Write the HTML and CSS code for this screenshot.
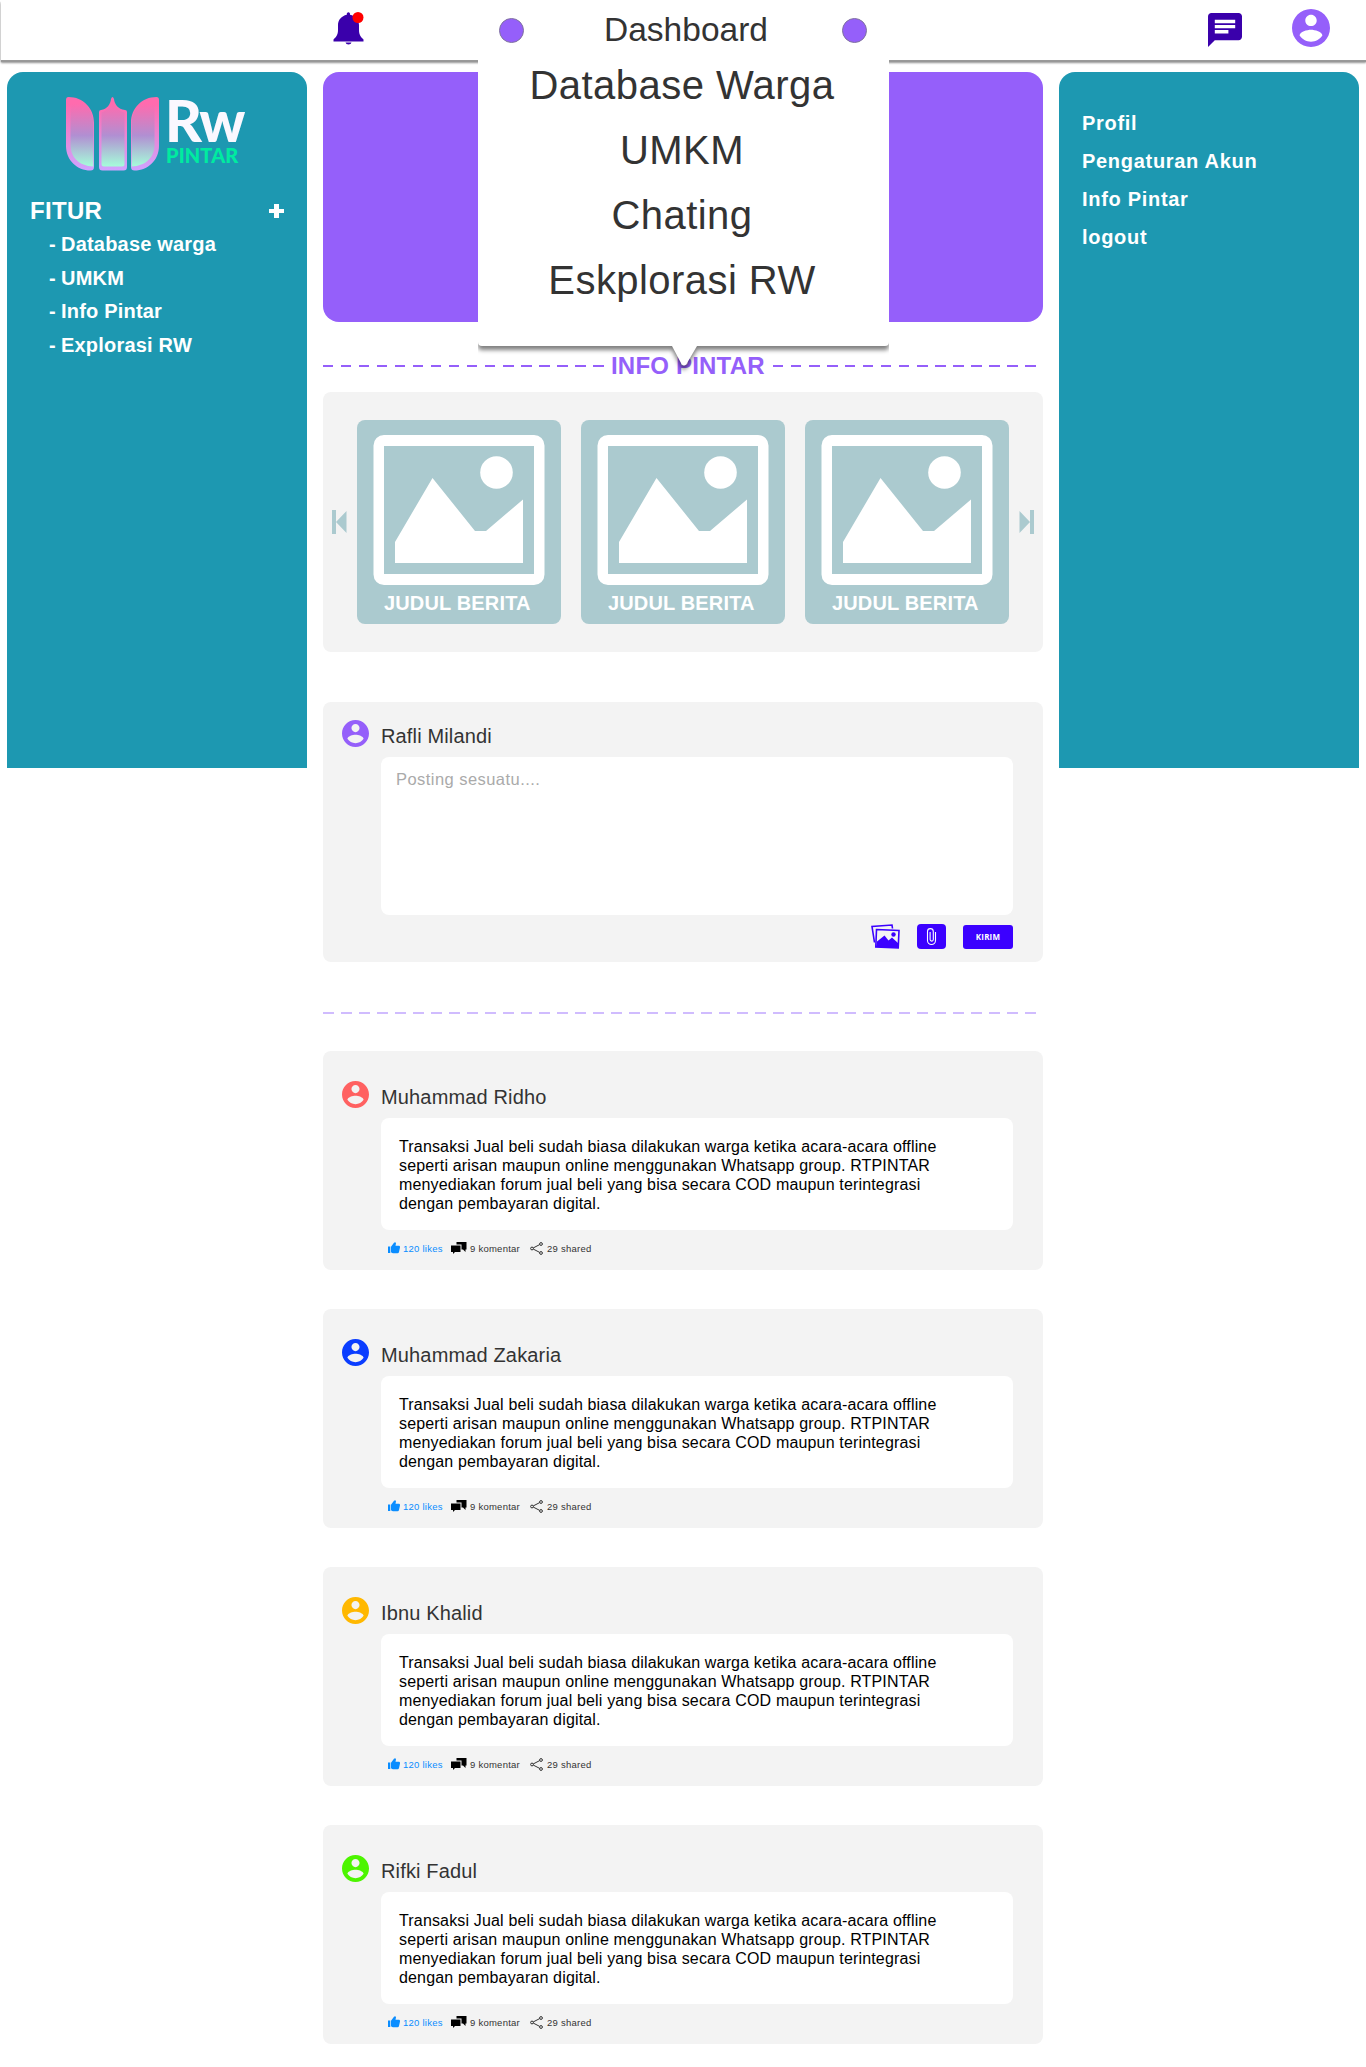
FILE: index.html
```html
<!DOCTYPE html>
<html lang="id">
<head>
<meta charset="utf-8">
<title>RW Pintar</title>
<link rel="stylesheet" href="styles.css">
</head>
<body>
<svg class="defs" width="0" height="0">
  <defs>
    <linearGradient id="petal-rim" gradientUnits="userSpaceOnUse" x1="0" y1="0" x2="0" y2="73"><stop offset=".1" stop-color="#ff6bae"/><stop offset="1" stop-color="#cfa3ff"/></linearGradient>
    <linearGradient id="petal-fill" gradientUnits="userSpaceOnUse" x1="0" y1="0" x2="0" y2="70"><stop offset=".1" stop-color="#ff6bae"/><stop offset=".55" stop-color="#b18fd2"/><stop offset="1" stop-color="#a5ffda"/></linearGradient>
  </defs>
  <symbol id="avatar" viewBox="2 2 20 20"><path fill="currentColor" d="M12 2C6.48 2 2 6.48 2 12s4.480 10 10 10 10-4.480 10-10S17.520 2 12 2zm0 3c1.660 0 3 1.340 3 3s-1.340 3-3 3-3-1.340-3-3 1.340-3 3-3zm0 14.200c-2.500 0-4.710-1.280-6-3.220.03-1.990 4-3.080 6-3.080 1.990 0 5.970 1.090 6 3.080-1.290 1.940-3.500 3.220-6 3.220z"/></symbol>
  <symbol id="picture" viewBox="0 0 172 150"><path fill="#fff" fill-rule="evenodd" d="M11 0H161A10.500 10.500 0 0 1 171.500 10.500V139.500A10.500 10.500 0 0 1 161 150H11A10.500 10.500 0 0 1 .5 139.500V10.500A10.500 10.500 0 0 1 11 0zM11 11V139H161V11zM22 107 59.500 43 102 96H113L150 64.500V128H22z"/><circle cx="123.500" cy="37.500" r="16.300" fill="#fff"/></symbol>
  <symbol id="like" viewBox="0 0 12 12"><path fill="currentColor" d="M0 4.500h2.300V11H0zM3 4.800 6 .7Q7.500-.3 8 1.200L7.500 3.800H11Q12.200 4 12 5.500L11 10Q10.700 11.200 9.500 11.200H5Q3 11 3 9.800z"/></symbol>
  <symbol id="comment" viewBox="0 0 16 12"><path fill="currentColor" d="M5.500 0H15.500V7.500H14.500V10L12 7.500H10.500V2.500H5.500zM0 3.500H9.500V10H4L2 12V10H0z"/></symbol>
  <symbol id="share" viewBox="0 0 13 13"><g fill="none" stroke="currentColor" stroke-width="1"><circle cx="2" cy="6.500" r="1.400"/><circle cx="11" cy="2" r="1.400"/><circle cx="11" cy="11" r="1.400"/><path d="M3.300 5.900 9.700 2.600M3.300 7.100l6.400 3.300"/></g></symbol>
</svg>

<header class="topbar">
  <svg class="bell" width="32" height="34" viewBox="0 0 32 34"><path fill="#3a00ab" d="M13.800 1.500q1.700-2.600 3.200 0v1.300C22.500 4 26 8 26 13v5c0 5 2 7 4.500 9.500V29.500H.5v-2C3 25 5 23 5 18v-5C5 8 8.500 4 13.800 2.800zM12.500 30.500h6q-.5 2-3 2t-3-2z"/><circle cx="25" cy="5.500" r="5.500" fill="#f00"/></svg>
  <svg class="chat" width="34" height="34" viewBox="2 2 20 20"><path fill="#3a00ab" d="M20 2H4c-1.100 0-1.990.9-1.990 2L2 22l4-4h14c1.100 0 2-.9 2-2V4c0-1.100-.9-2-2-2zM6 9h12v2H6V9zm8 5H6v-2h8v2zm4-6H6V6h12v2z"/></svg>
  <svg class="me" width="38" height="38"><use href="#avatar"/></svg>
</header>

<div class="layout">
  <aside class="side">
    <div class="brand">
      <svg width="94" height="74" viewBox="0 0 94 74">
        <path fill="url(#petal-rim)" d="M2.500 0C17 0 28 11 28 26V70q0 3.500-3.500 3.500C11 73.500 0 63 0 49V3Q0 0 2.500 0zM33 15q0-2 2-2C41 12.500 44.500 7 45 2q1.500-4 3 0c.5 5 4 10.500 11 11q2 0 2 2V70q0 3.500-3.500 3.500h-21Q33 73.500 33 70zM90.500 0C76 0 65 11 65 26V70q0 3.500 3.500 3.500C82 73.500 93 63 93 49V3Q93 0 90.500 0z"/>
        <path fill="url(#petal-fill)" d="M4.500 2C17 2 27.300 13 27.300 26V69.500C13 69 4.500 60 4.500 48zM35.500 15.500C42 13 46 8 46.500 4 47 8 51 13 58.500 15.500V67q0 2.500-2.500 2.500H38Q35.500 69.500 35.500 67zM88.500 2C76 2 65.700 13 65.700 26V69.500C80 69 88.500 60 88.500 48z"/>
      </svg>
      <div class="brand-text"><b class="rw">Rw</b><b class="pintar">PINTAR</b></div>
    </div>
    <h2 class="side-head"><span>FITUR</span><svg width="15" height="14"><path fill="#fff" d="M5 0h5v5h5v4h-5v5H5V9H0V5h5z"/></svg></h2>
    <ul class="features">
      <li><i>-</i>Database warga</li><li><i>-</i>UMKM</li><li><i>-</i>Info Pintar</li><li><i>-</i>Explorasi RW</li>
    </ul>
  </aside>

  <main class="feed">
    <section class="hero"></section>
    <div class="divider"><span class="dash dash-left"></span><span class="divider-text">INFO PINTAR</span><span class="dash dash-right"></span></div>
    <section class="news">
      <svg class="arrow" width="15" height="24"><path fill="#abcacf" d="M0 0h4v24H0zM4 12 14.500 1V23z"/></svg>
      <div class="tiles">
        <article class="tile"><svg width="172" height="150"><use href="#picture"/></svg><h3>JUDUL BERITA</h3></article>
        <article class="tile"><svg width="172" height="150"><use href="#picture"/></svg><h3>JUDUL BERITA</h3></article>
        <article class="tile"><svg width="172" height="150"><use href="#picture"/></svg><h3>JUDUL BERITA</h3></article>
      </div>
      <svg class="arrow" width="15" height="24"><path fill="#abcacf" d="M11 0h4v24h-4zM11 12 .5 1V23z"/></svg>
    </section>

    <section class="composer">
      <div class="author"><svg class="face violet" width="27" height="27"><use href="#avatar"/></svg><span>Rafli Milandi</span></div>
      <div class="input">Posting sesuatu....</div>
      <div class="actions">
        <svg width="29" height="25" viewBox="0 0 29 25"><g fill="none" stroke="#3b00ff" stroke-width="1.600"><path d="M3.500 18.500 1 2.500 21 1l.5 3.500"/><path d="M5.500 5.500 28 6.500 27.200 24 4.800 23z"/></g><path fill="#3b00ff" d="M5 23 6 17.500 13.500 11.500 17.500 16.500 21 13.500 27.500 19.500V24z"/><circle cx="22.500" cy="10.500" r="2.200" fill="#3b00ff"/></svg>
        <svg width="29" height="25" viewBox="0 0 29 25"><rect width="29" height="25" rx="4" fill="#3b00ff"/><path fill="none" stroke="#fff" stroke-width="1.100" d="M18.500 8v8.500a4 4 0 0 1-8 0V7.500a2.900 2.900 0 0 1 5.800 0v8a1.600 1.600 0 0 1-3.200 0V8"/></svg>
        <button class="send">KIRIM</button>
      </div>
    </section>

    <div class="divider pale"><span class="dash"></span></div>

    <article class="post">
      <div class="author"><svg class="face red" width="27" height="27"><use href="#avatar"/></svg><span>Muhammad Ridho</span></div>
      <p>Transaksi Jual beli sudah biasa dilakukan warga ketika acara-acara offline<br>seperti arisan maupun online menggunakan Whatsapp group. RTPINTAR<br>menyediakan forum jual beli yang bisa secara COD maupun terintegrasi<br>dengan pembayaran digital.</p>
      <div class="stats"><svg class="like" width="12" height="12"><use href="#like"/></svg><span class="likes">120 likes</span><svg class="comment" width="16" height="12"><use href="#comment"/></svg><span class="comments">9 komentar</span><svg class="share" width="13" height="13"><use href="#share"/></svg><span class="shares">29 shared</span></div>
    </article>
    <article class="post">
      <div class="author"><svg class="face blue" width="27" height="27"><use href="#avatar"/></svg><span>Muhammad Zakaria</span></div>
      <p>Transaksi Jual beli sudah biasa dilakukan warga ketika acara-acara offline<br>seperti arisan maupun online menggunakan Whatsapp group. RTPINTAR<br>menyediakan forum jual beli yang bisa secara COD maupun terintegrasi<br>dengan pembayaran digital.</p>
      <div class="stats"><svg class="like" width="12" height="12"><use href="#like"/></svg><span class="likes">120 likes</span><svg class="comment" width="16" height="12"><use href="#comment"/></svg><span class="comments">9 komentar</span><svg class="share" width="13" height="13"><use href="#share"/></svg><span class="shares">29 shared</span></div>
    </article>
    <article class="post">
      <div class="author"><svg class="face amber" width="27" height="27"><use href="#avatar"/></svg><span>Ibnu Khalid</span></div>
      <p>Transaksi Jual beli sudah biasa dilakukan warga ketika acara-acara offline<br>seperti arisan maupun online menggunakan Whatsapp group. RTPINTAR<br>menyediakan forum jual beli yang bisa secara COD maupun terintegrasi<br>dengan pembayaran digital.</p>
      <div class="stats"><svg class="like" width="12" height="12"><use href="#like"/></svg><span class="likes">120 likes</span><svg class="comment" width="16" height="12"><use href="#comment"/></svg><span class="comments">9 komentar</span><svg class="share" width="13" height="13"><use href="#share"/></svg><span class="shares">29 shared</span></div>
    </article>
    <article class="post">
      <div class="author"><svg class="face green" width="27" height="27"><use href="#avatar"/></svg><span>Rifki Fadul</span></div>
      <p>Transaksi Jual beli sudah biasa dilakukan warga ketika acara-acara offline<br>seperti arisan maupun online menggunakan Whatsapp group. RTPINTAR<br>menyediakan forum jual beli yang bisa secara COD maupun terintegrasi<br>dengan pembayaran digital.</p>
      <div class="stats"><svg class="like" width="12" height="12"><use href="#like"/></svg><span class="likes">120 likes</span><svg class="comment" width="16" height="12"><use href="#comment"/></svg><span class="comments">9 komentar</span><svg class="share" width="13" height="13"><use href="#share"/></svg><span class="shares">29 shared</span></div>
    </article>
  </main>

  <aside class="side account">
    <ul><li>Profil</li><li>Pengaturan Akun</li><li>Info Pintar</li><li>logout</li></ul>
  </aside>
</div>

<nav class="menu">
  <svg class="menu-shape" width="411" height="380"><path fill="#fff" d="M0 0H411V342Q411 346 407 346H219L208.500 364Q206 367 203.500 364L194 346H4Q0 346 0 342z"/></svg>
  <div class="menu-head"><span class="knob"></span><span class="menu-title">Dashboard</span><span class="knob"></span></div>
  <ul class="menu-list"><li>Database Warga</li><li>UMKM</li><li>Chating</li><li>Eskplorasi RW</li></ul>
</nav>
</body>
</html>
```
FILE: styles.css
```css
* { box-sizing: border-box; }
body {
  margin: 0;
  height: 2067px;
  position: relative;
  overflow-x: hidden;
  background: #fff;
  color: #333;
  font-family: "Liberation Sans", Arial, sans-serif;
}
ul, h2, h3, p { margin: 0; padding: 0; list-style: none; }
svg { display: block; flex: none; }
.defs { position: absolute; }

.topbar {
  display: flex;
  align-items: flex-start;
  height: 60px;
  margin-left: 1px;
  padding: 0 36px 0 332px;
  background: #fff;
  box-shadow: 0 3px 2px #999, 0 2px 1px #999;
}
.bell { margin-top: 12px; }
.chat { margin: 13px 50px 0 auto; }
.me { margin-top: 9px; color: #955ffa; }

.layout {
  display: grid;
  grid-template-columns: 300px 720px 300px;
  gap: 16px;
  align-items: start;
  padding: 12px 7px 0;
}
.side {
  height: 696px;
  padding-top: 24px;
  border-radius: 16px 16px 0 0;
  background: #1d98b1;
  color: #fff;
  font-weight: bold;
  font-size: 20px;
  letter-spacing: .2px;
}
.brand { display: flex; gap: 5px; padding: 1px 0 0 59px; }
.brand-text { display: flex; flex-direction: column; font-family: Lato, sans-serif; }
.rw { font-size: 57px; line-height: 46px; color: #faf8ff; font-weight: 900; letter-spacing: -2px; }
.pintar { font-size: 20px; line-height: 24px; color: #00eba0; font-weight: 900; letter-spacing: .1px; padding-left: 1px; }
.side-head {
  display: flex;
  justify-content: space-between;
  align-items: center;
  margin-top: 25px;
  padding: 0 23px;
  font-size: 24px;
  line-height: 30px;
  letter-spacing: .3px;
}
.features { margin-top: 2px; padding-left: 42px; }
.features li { display: flex; line-height: 33.600px; }
.features i { width: 12px; font-style: normal; }
.account { padding: 32px 0 0 23px; letter-spacing: .7px; }
.account li { line-height: 38px; }

.hero { height: 250px; border-radius: 16px; background: #955ffa; }
.divider { display: flex; align-items: center; height: 30px; margin: 29px 0 11px; }
.divider-text {
  margin: 0 8px 0 7px;
  color: #955ffa;
  font-size: 24px;
  line-height: 30px;
  letter-spacing: .2px;
  font-weight: bold;
  white-space: nowrap;
}
.dash { flex: none; width: 720px; height: 2px; background: repeating-linear-gradient(90deg, #955ffa 0 10.500px, transparent 10.500px 18px); }
.dash-left { width: 281px; }
.dash-right { width: 264px; }
.pale { height: 2px; margin: 50px 0 37px; }
.pale .dash { background: repeating-linear-gradient(90deg, #d0bcfe 0 11px, transparent 11px 18px); width: 713px; }

.news {
  display: flex;
  align-items: center;
  justify-content: space-between;
  height: 260px;
  padding: 0 9px;
  border-radius: 8px;
  background: #f3f3f3;
}
.tiles { display: flex; gap: 20px; }
.tile { width: 204px; height: 204px; padding: 15px 16px; border-radius: 8px; background: #abcacf; }
.tile h3 { padding-left: 11px; margin-top: 6px; color: #fff; font-size: 20px; line-height: 24px; letter-spacing: .15px; white-space: nowrap; }

.composer { height: 260px; margin-top: 50px; padding: 18px 30px 0 19px; border-radius: 8px; background: #f3f3f3; }
.author { display: flex; gap: 12px; height: 37px; font-size: 20px; line-height: 32px; letter-spacing: .15px; }
.input {
  height: 158px;
  margin-left: 39px;
  padding: 13px 15px;
  border-radius: 8px;
  background: #fff;
  color: #aaa;
  font-size: 16.500px;
  line-height: 19px;
  letter-spacing: .45px;
}
.actions { display: flex; gap: 17px; justify-content: flex-end; align-items: flex-start; margin-top: 9px; }
.send {
  width: 50px;
  height: 24px;
  margin-top: 1px;
  padding: 0 0 1px;
  border: 0;
  border-radius: 3px;
  background: #3b00ff;
  color: #fff;
  font: bold 8px "Open Sans", sans-serif;
  letter-spacing: .2px;
}
.violet { color: #955ffa; }
.red { color: #ff6161; }
.blue { color: #0a3dff; }
.amber { color: #ffb800; }
.green { color: #4cf500; }

.post { height: 219px; margin-bottom: 39px; padding: 30px 30px 0 19px; border-radius: 8px; background: #f3f3f3; }
.post p {
  height: 112px;
  margin-left: 39px;
  padding: 19px 18px;
  border-radius: 8px;
  background: #fff;
  color: #000;
  font-size: 16px;
  line-height: 19px;
  letter-spacing: .16px;
  white-space: nowrap;
}
.stats { display: flex; align-items: center; height: 14px; margin: 11px 0 0 46px; font-size: 9.500px; letter-spacing: .25px; white-space: nowrap; }
.like, .likes { color: #0a8dff; }
.likes { width: 48px; margin-left: 3px; }
.comment { color: #000; }
.comments { width: 60px; margin-left: 3px; }
.shares { margin-left: 4px; }

.menu { position: absolute; left: 478px; top: 0; width: 411px; }
.menu-shape { position: absolute; left: 0; top: 0; }
.menu-shape path { filter: drop-shadow(0 4px 2px rgba(0, 0, 0, .5)); }
.menu-head { position: relative; display: flex; justify-content: space-between; align-items: center; height: 60px; padding: 0 22px 0 21px; }
.menu-title { padding-left: 6px; font-size: 33.500px; }
.knob { width: 25px; height: 25px; border: 1px solid #80739f; border-radius: 50%; background: #955ffa; }
.menu-list { position: relative; margin-top: -7px; padding-right: 3px; text-align: center; font-size: 40px; line-height: 65px; letter-spacing: .45px; }
```
